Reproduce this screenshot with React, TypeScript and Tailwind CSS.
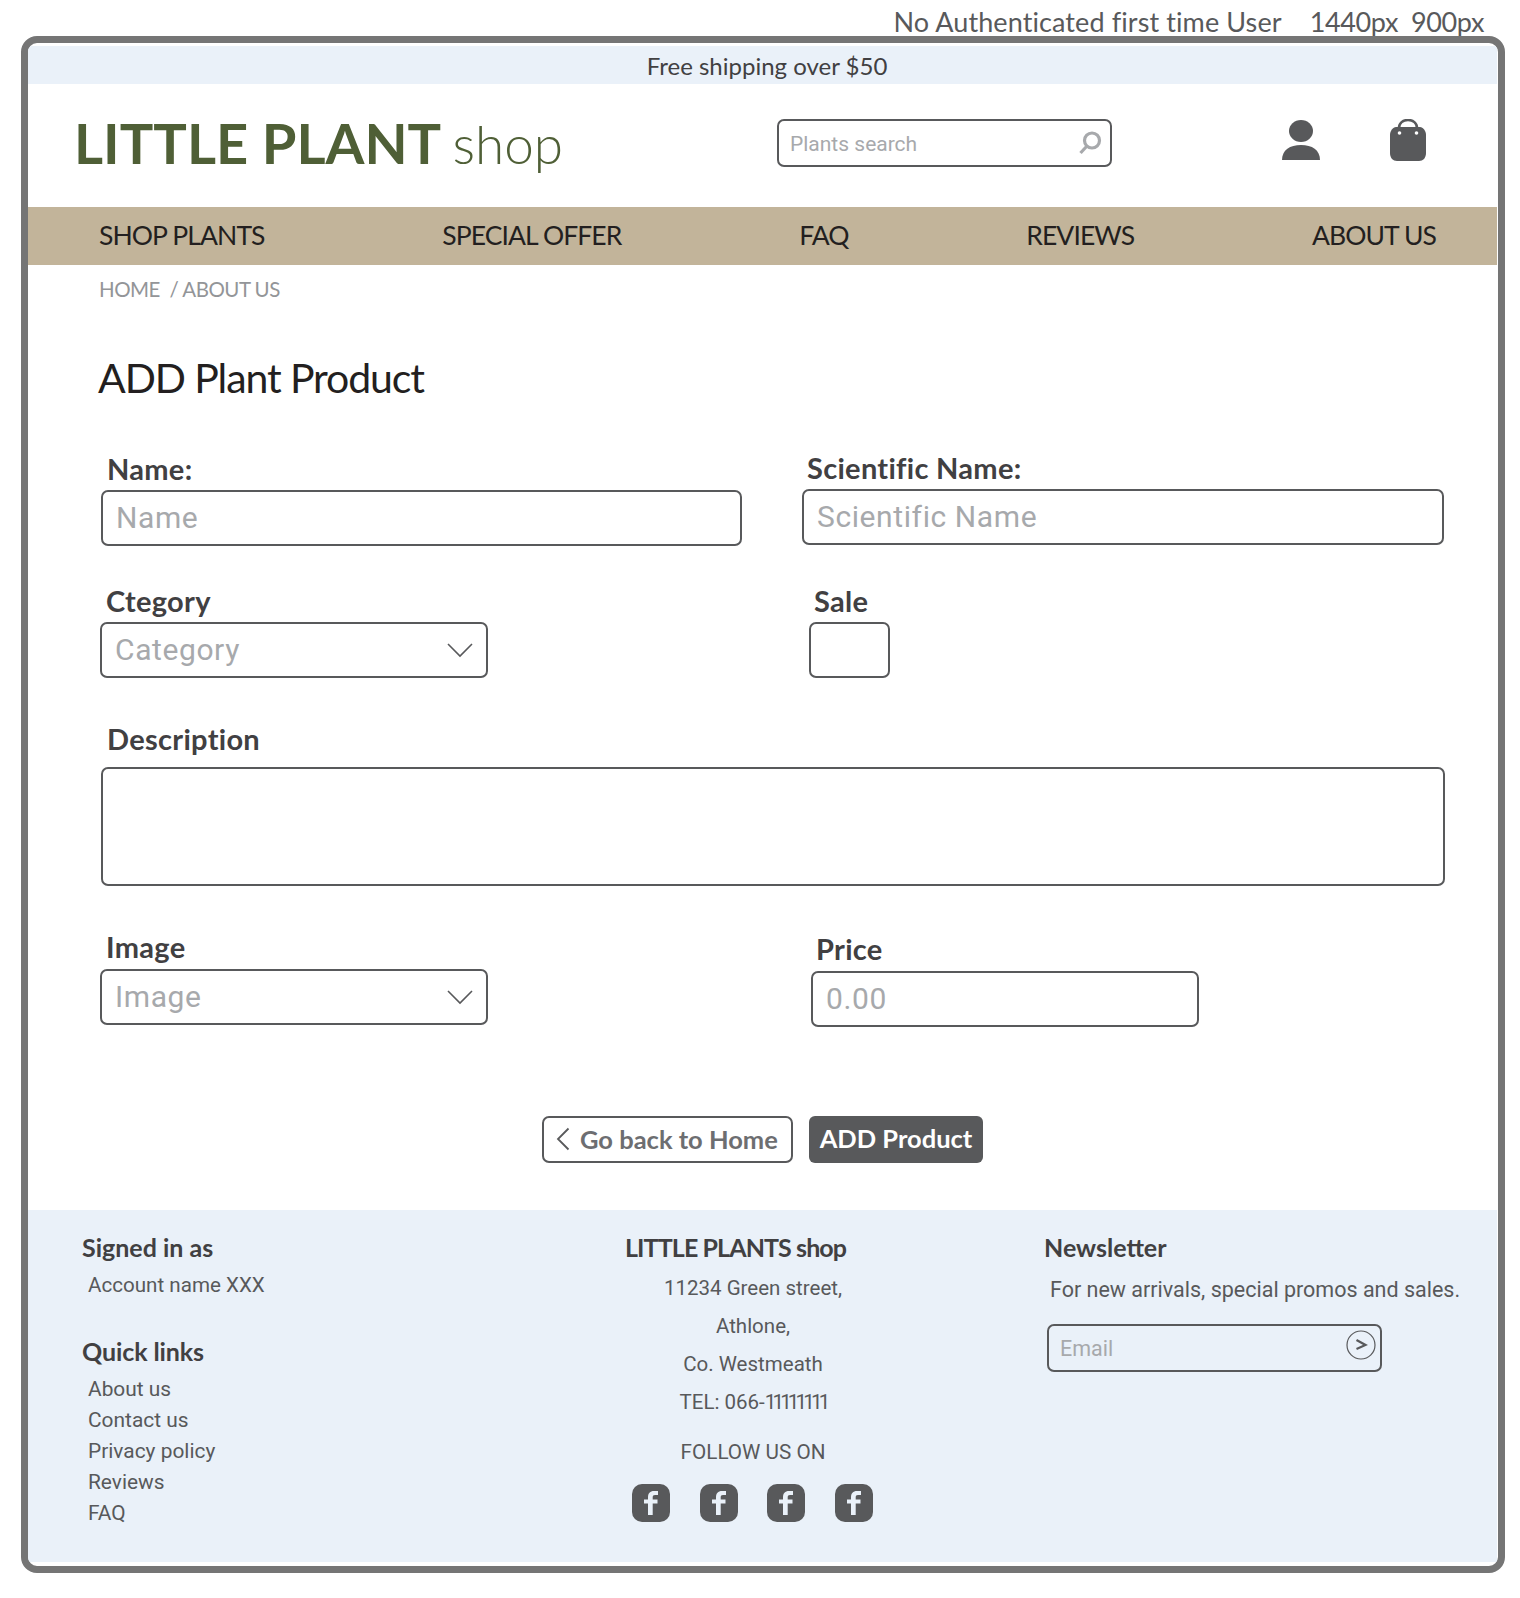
const din = "font-['Roboto',sans-serif]";
const myr = "font-['Lato',sans-serif]";

function Chevron() {
  return (
    <svg width="28" height="16" viewBox="0 0 28 16" fill="none" stroke="#58595b" strokeWidth="1.6">
      <path d="M2 2l12 12L26 2" />
    </svg>
  );
}

function Label({ children, className = "" }: { children: React.ReactNode; className?: string }) {
  return <div className={`${myr} text-[29px] leading-[34px] tracking-[0.3px] font-bold text-[#414042] ${className}`}>{children}</div>;
}

function Field({ text, className = "", chevron }: { text?: string; className?: string; chevron?: boolean }) {
  return (
    <div className={`h-[56px] border-2 border-[#58595b] rounded-[7px] flex items-center justify-between pl-[13px] pr-[12px] ${din} text-[30px] tracking-[0.6px] text-[#a7a9ac] ${className}`}>
      <span className="-mt-[2px]">{text}</span>
      {chevron && <Chevron />}
    </div>
  );
}

function Fb() {
  return (
    <div className="w-[38px] h-[38px] rounded-[10px] bg-[#58595b] flex items-center justify-center">
      <svg width="14" height="24" viewBox="0 0 14 24" fill="#eaf1f9">
        <path d="M4 24V12.5H0V8.5h4V6c0-3.6 2-6 6-6h4v4h-3c-1.6 0-2.3.8-2.3 2.3v2.2H13.5v4H8.7V24z" />
      </svg>
    </div>
  );
}

export default function App() {
  return (
    <div className="w-[1520px] h-[1598px] bg-white overflow-hidden flex flex-col">
      <div className={`${myr} h-[36px] flex justify-end items-start pr-[36px] text-[27px] leading-[44px] text-[#58595b] gap-[28px]`}>
        <span className="tracking-[0.1px]">No Authenticated first time User</span>
        <span className="tracking-[-0.4px]">1440px&nbsp; 900px</span>
      </div>

      <div className="ml-[21px] w-[1484px] h-[1537px] border-[7px] border-[#757575] rounded-[16px] bg-white pt-[3px] pr-[1px] pb-[4px] flex flex-col overflow-hidden">
        {/* banner */}
        <div className={`${myr} h-[38px] shrink-0 bg-[#eaf1f9] flex items-center justify-center pt-[2px] pl-[9px] text-[24px] text-[#414042]`}>
          Free shipping over $50
        </div>

        {/* header */}
        <div className="h-[123px] shrink-0 flex items-start relative">
          <div className={`${myr} pl-[46px] pt-[19px] w-[749px] text-[#4f5f36] text-[56px] leading-[80px] whitespace-nowrap`}>
            <span className="font-bold">LITTLE PLANT</span> <span className="font-light text-[53px] -ml-[3px]">shop</span>
          </div>
          <div className="mt-[35px] w-[335px] h-[48px] border-2 border-[#58595b] rounded-[7px] flex items-center justify-between pl-[11px] pr-[8px]">
            <span className={`${din} text-[21px] pt-[3px] text-[#a7a9ac]`}>Plants search</span>
            <svg width="24" height="26" viewBox="0 0 24 26" fill="none" stroke="#a7a9ac" strokeWidth="3.2">
              <circle cx="14" cy="10.5" r="7.5" />
              <path d="M8.5 16.5L2.5 23" />
            </svg>
          </div>
          <svg className="ml-[170px] mt-[36px]" width="38" height="40" viewBox="0 0 38 40" fill="#58595b">
            <ellipse cx="19" cy="11" rx="12" ry="11" />
            <path d="M0 40c0-10 8-15 19-15s19 5 19 15z" />
          </svg>
          <svg className="ml-[70px] mt-[35px]" width="36" height="42" viewBox="0 0 36 42" fill="#58595b">
            <path d="M9 12V9c0-5 4-8 9-8s9 3 9 8v3" fill="none" stroke="#58595b" strokeWidth="2.6" />
            <path d="M6 8h24c3 0 6 4 6 8v18c0 5-3 8-7 8H7c-4 0-7-3-7-8V16c0-4 3-8 6-8z" />
            <circle cx="9.5" cy="14" r="1.8" fill="#fff" />
            <circle cx="26.5" cy="14" r="1.8" fill="#fff" />
          </svg>
        </div>

        {/* nav */}
        <div className={`${myr} h-[58px] shrink-0 bg-[#c2b49a] flex items-center justify-between pl-[71px] pr-[61px] text-[26.5px] tracking-[-0.9px] text-[#231f20]`}>
          <span>SHOP PLANTS</span>
          <span>SPECIAL OFFER</span>
          <span>FAQ</span>
          <span>REVIEWS</span>
          <span>ABOUT US</span>
        </div>

        {/* breadcrumb */}
        <div className={`${myr} pl-[71px] pt-[9px] text-[20.5px] tracking-[-0.5px] leading-[30px] text-[#939598]`}>HOME &nbsp;/ ABOUT US</div>

        {/* form */}
        <h1 className={`${myr} pl-[70px] pt-[44px] text-[41px] tracking-[-1.1px] leading-[60px] font-normal text-[#231f20]`}>ADD Plant Product</h1>

        <div className="pt-[44px] pl-[73px] flex">
          <div className="w-[701px]">
            <Label className="pl-[6px] mb-[4px]">Name:</Label>
            <Field text="Name" className="w-[641px]" />
          </div>
          <div className="-mt-px">
            <Label className="pl-[5px] mb-[4px]">Scientific Name:</Label>
            <Field text="Scientific Name" className="w-[642px]" />
          </div>
        </div>

        <div className="pt-[38px] pl-[72px] flex">
          <div className="w-[709px]">
            <Label className="pl-[6px] mb-[4px]">Ctegory</Label>
            <Field text="Category" className="w-[388px]" chevron />
          </div>
          <div>
            <Label className="pl-[5px] mb-[4px]">Sale</Label>
            <Field className="w-[81px]" />
          </div>
        </div>

        <div className="pt-[44px] pl-[73px]">
          <Label className="pl-[6px] mb-[11px]">Description</Label>
          <div className="w-[1344px] h-[119px] border-2 border-[#58595b] rounded-[7px]" />
        </div>

        <div className="pt-[44px] pl-[72px] flex">
          <div className="w-[711px]">
            <Label className="pl-[6px] mb-[5px]">Image</Label>
            <Field text="Image" className="w-[388px]" chevron />
          </div>
          <div className="mt-[2px]">
            <Label className="pl-[5px] mb-[5px]">Price</Label>
            <Field text="0.00" className="w-[388px]" />
          </div>
        </div>

        <div className={`${myr} pt-[89px] pl-[514px] flex gap-[16px] text-[25.5px] font-bold`}>
          <div className="w-[251px] h-[47px] border-2 border-[#58595b] rounded-[7px] flex items-center pl-[12px] pb-[1px] gap-[10px] text-[#6d6e71]">
            <svg width="14" height="24" viewBox="0 0 14 24" fill="none" stroke="#58595b" strokeWidth="1.8">
              <path d="M12.5 1.5L2 12l10.5 10.5" />
            </svg>
            Go back to Home
          </div>
          <div className="w-[174px] h-[47px] rounded-[6px] bg-[#58595b] text-white flex items-center justify-center pb-[2px]">
            ADD Product
          </div>
        </div>

        {/* footer */}
        <div className="mt-auto h-[352px] shrink-0 bg-[#eaf1f9] pl-[54px] pt-[21px] flex text-[#58595b]">
          <div className="w-[543px]">
            <div className={`${myr} text-[25px] leading-[32px] font-bold text-[#414042]`}>Signed in as</div>
            <div className={`${din} pl-[6px] pt-[6px] text-[20.6px] leading-[32px]`}>Account name XXX</div>
            <div className={`${myr} pt-[34px] text-[25px] leading-[32px] font-bold tracking-[-0.1px] text-[#414042]`}>Quick links</div>
            <div className={`${din} pl-[6px] pt-[7px] text-[20.9px] leading-[31px]`}>
              <div>About us</div>
              <div>Contact us</div>
              <div>Privacy policy</div>
              <div>Reviews</div>
              <div>FAQ</div>
            </div>
          </div>
          <div className="w-[419px]">
            <div className={`${myr} text-[25px] tracking-[-0.9px] leading-[32px] font-bold text-[#414042]`}>LITTLE PLANTS shop</div>
            <div className={`${din} w-[256px] text-center pt-[6px] text-[20.5px] leading-[38px]`}>
              <div>11234 Green street,</div>
              <div>Athlone,</div>
              <div>Co. Westmeath</div>
              <div>TEL: 066-<span className="tracking-[-3.8px]">11111111</span></div>
              <div className="pt-[12px] text-[20.7px]">FOLLOW US ON</div>
            </div>
            <div className="pt-[13px] pl-[7px] w-[248px] flex justify-between">
              <Fb />
              <Fb />
              <Fb />
              <Fb />
            </div>
          </div>
          <div>
            <div className={`${myr} text-[25px] leading-[32px] font-bold text-[#414042]`}>Newsletter</div>
            <div className={`${din} pl-[6px] pt-[11px] text-[21.5px] leading-[32px]`}>For new arrivals, special promos and sales.</div>
            <div className="ml-[3px] mt-[18px] w-[335px] h-[48px] border-2 border-[#58595b] rounded-[7px] flex items-center justify-between pl-[11px] pr-[4px]">
              <span className={`${din} text-[21.5px] pt-[2px] text-[#a7a9ac]`}>Email</span>
              <svg className="-mt-[6px]" width="30" height="30" viewBox="0 0 30 30" fill="none" stroke="#58595b">
                <circle cx="15" cy="15" r="14" strokeWidth="1.2" />
                <path d="M10.5 10l9 5-9 4" strokeWidth="2.2" />
              </svg>
            </div>
          </div>
        </div>
      </div>
    </div>
  );
}
